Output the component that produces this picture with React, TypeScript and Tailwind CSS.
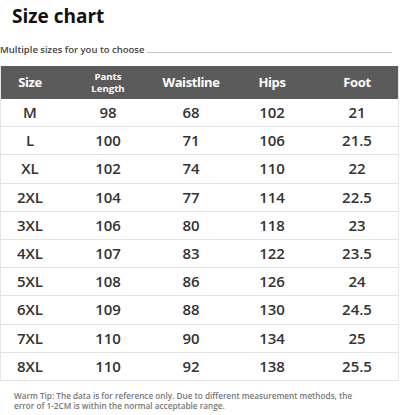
import React from "react";

const rows: [string, string, string, string, string][] = [
  ["M", "98", "68", "102", "21"],
  ["L", "100", "71", "106", "21.5"],
  ["XL", "102", "74", "110", "22"],
  ["2XL", "104", "77", "114", "22.5"],
  ["3XL", "106", "80", "118", "23"],
  ["4XL", "107", "83", "122", "23.5"],
  ["5XL", "108", "86", "126", "24"],
  ["6XL", "109", "88", "130", "24.5"],
  ["7XL", "110", "90", "134", "25"],
  ["8XL", "110", "92", "138", "25.5"],
];

const cols = "grid grid-cols-[58px_98px_68px_94px_76px]";

export default function App() {
  return (
    <div
      className="w-[400px] h-[415px] bg-white overflow-hidden"
      style={{ fontFamily: '"Open Sans", sans-serif' }}
    >
      <div className="pl-[12px] pt-[3px] h-[36px] text-[19px] font-bold text-[#111] leading-[26px]">
        Size chart
      </div>
      <div className="flex items-center h-[30px] pb-[2px]">
        <span className="text-[9.5px] font-semibold text-[#444] leading-none whitespace-nowrap">
          Multiple sizes for you to choose
        </span>
        <div className="ml-[3px] mt-[5px] w-[245px] h-px bg-[#c8c8c8]" />
      </div>
      <div className="border-x border-[#e6e6e6] w-[399px]">
        <div className={`${cols} h-[33px] bg-[#5b5b5b] items-center text-white font-bold`}>
          <div className="text-center text-[13px] tracking-[-0.4px]">Size</div>
          <div className="text-center text-[9.6px] leading-[11.5px] flex flex-col">
            <span>Pants</span>
            <span>Length</span>
          </div>
          <div className="text-center text-[13px] tracking-[-0.4px]">Waistline</div>
          <div className="text-center text-[13px] tracking-[-0.4px]">Hips</div>
          <div className="text-center text-[13px] tracking-[-0.4px]">Foot</div>
        </div>
        {rows.map((r) => (
          <div
            key={r[0]}
            className={`${cols} h-[28.2px] items-center border-b border-[#e3e3e3] text-[15px] text-[#333] font-semibold`}
          >
            {r.map((c, i) => (
              <div key={i} className="text-center leading-none">
                {c}
              </div>
            ))}
          </div>
        ))}
      </div>
      <div className="pl-[14px] pt-[10px] pr-[28px] text-[8.2px] leading-[10px] font-semibold text-[#777]">
        Warm Tip: The data is for reference only. Due to different measurement methods, the error of 1-2CM is within the normal acceptable range.
      </div>
    </div>
  );
}
